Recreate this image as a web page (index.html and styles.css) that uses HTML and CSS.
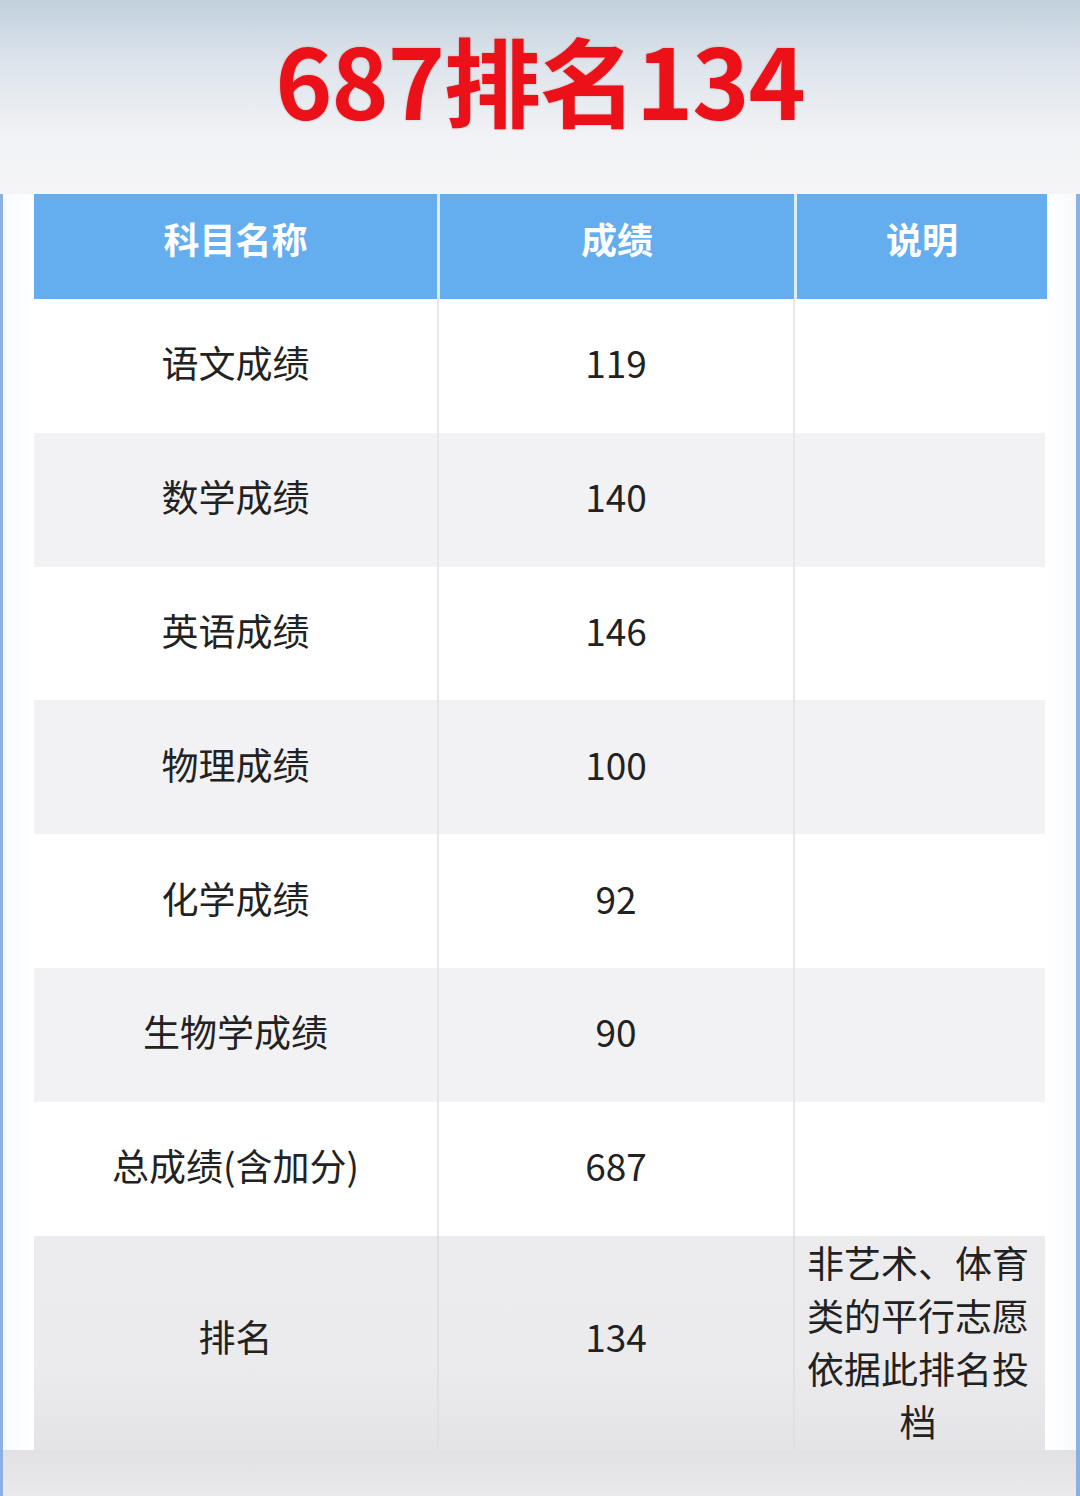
FILE: index.html
```html
<!DOCTYPE html>
<html lang="zh-CN">
<head>
<meta charset="utf-8">
<title>687排名134</title>
<link rel="stylesheet" href="styles.css">
</head>
<body>
<div class="page">
  <header class="top">
    <h1 class="title">687排名134</h1>
  </header>
  <main class="frame">
    <div class="table">
      <div class="row head">
        <div class="cell">科目名称</div>
        <div class="cell">成绩</div>
        <div class="cell">说明</div>
      </div>
      <div class="row">
        <div class="cell">语文成绩</div>
        <div class="cell">119</div>
        <div class="cell"></div>
      </div>
      <div class="row alt">
        <div class="cell">数学成绩</div>
        <div class="cell">140</div>
        <div class="cell"></div>
      </div>
      <div class="row">
        <div class="cell">英语成绩</div>
        <div class="cell">146</div>
        <div class="cell"></div>
      </div>
      <div class="row alt">
        <div class="cell">物理成绩</div>
        <div class="cell">100</div>
        <div class="cell"></div>
      </div>
      <div class="row">
        <div class="cell">化学成绩</div>
        <div class="cell">92</div>
        <div class="cell"></div>
      </div>
      <div class="row alt">
        <div class="cell">生物学成绩</div>
        <div class="cell">90</div>
        <div class="cell"></div>
      </div>
      <div class="row">
        <div class="cell">总成绩(含加分)</div>
        <div class="cell">687</div>
        <div class="cell"></div>
      </div>
      <div class="row last">
        <div class="cell">排名</div>
        <div class="cell">134</div>
        <div class="cell note">非艺术、体育类的平行志愿依据此排名投档</div>
      </div>
    </div>
    <div class="foot"></div>
  </main>
</div>
</body>
</html>
```

FILE: styles.css
```css
* { box-sizing: border-box; }
html, body { margin: 0; padding: 0; }
body {
  width: 1080px;
  height: 1496px;
  overflow: hidden;
  background: #ffffff;
  font-family: "Noto Sans CJK SC", "Noto Sans", sans-serif;
  color: #222222;
}
.page { display: flex; flex-direction: column; height: 1496px; }
.top {
  height: 194px;
  flex: none;
  display: flex;
  justify-content: center;
  align-items: flex-start;
  background: linear-gradient(to bottom, #c3d1dd 0%, #dfe5ec 35%, #f1f2f5 70%, #f5f5f7 100%);
}
.title {
  margin: 0;
  margin-top: 18px;
  font-size: 97px;
  line-height: 120px;
  font-weight: 700;
  color: #ec1118;
  letter-spacing: -1px;
  text-shadow: 0 0 2px rgba(160, 0, 0, 0.35);
}
.frame {
  flex: 1;
  display: flex;
  flex-direction: column;
  overflow: hidden;
  border-left: 3px solid #8db0e2;
  border-right: 4px solid #8db0e2;
  background: linear-gradient(to right, #f7fafd 0px, #ffffff 30px, #ffffff 1040px, #f7fafd 100%);
}
.table {
  margin: 0 31px;
  display: flex;
  flex-direction: column;
}
.row {
  display: grid;
  grid-template-columns: 403px 354px 250px;
  column-gap: 2px;
  height: 133.8px;
  background: #e7e7e9;
}
.row .cell {
  display: flex;
  align-items: center;
  justify-content: center;
  font-size: 37px;
  padding-bottom: 7px;
  background: #ffffff;
}
.row.alt .cell { background: #f2f2f4; }
.row.head {
  height: 105px;
  column-gap: 3px;
  background: #dcebf8;
}
.row.head .cell {
  background: #64aef0;
  color: #ffffff;
  font-weight: 700;
  font-size: 36px;
  padding-bottom: 18px;
}
.row.last { height: 214px; background: #e0e0e2; }
.row.last .cell {
  padding-bottom: 14px;
  background: linear-gradient(to bottom, #ececee 0%, #ebebed 60%, #e4e4e6 100%);
}
.row.last .note {
  display: block;
  text-align: center;
  line-height: 53px;
  padding: 0 8px 0 4px;
  font-size: 37px;
}
.foot {
  flex: 1;
  background: linear-gradient(to bottom, #e2e2e5 0%, #e9e9ec 100%);
}
```
